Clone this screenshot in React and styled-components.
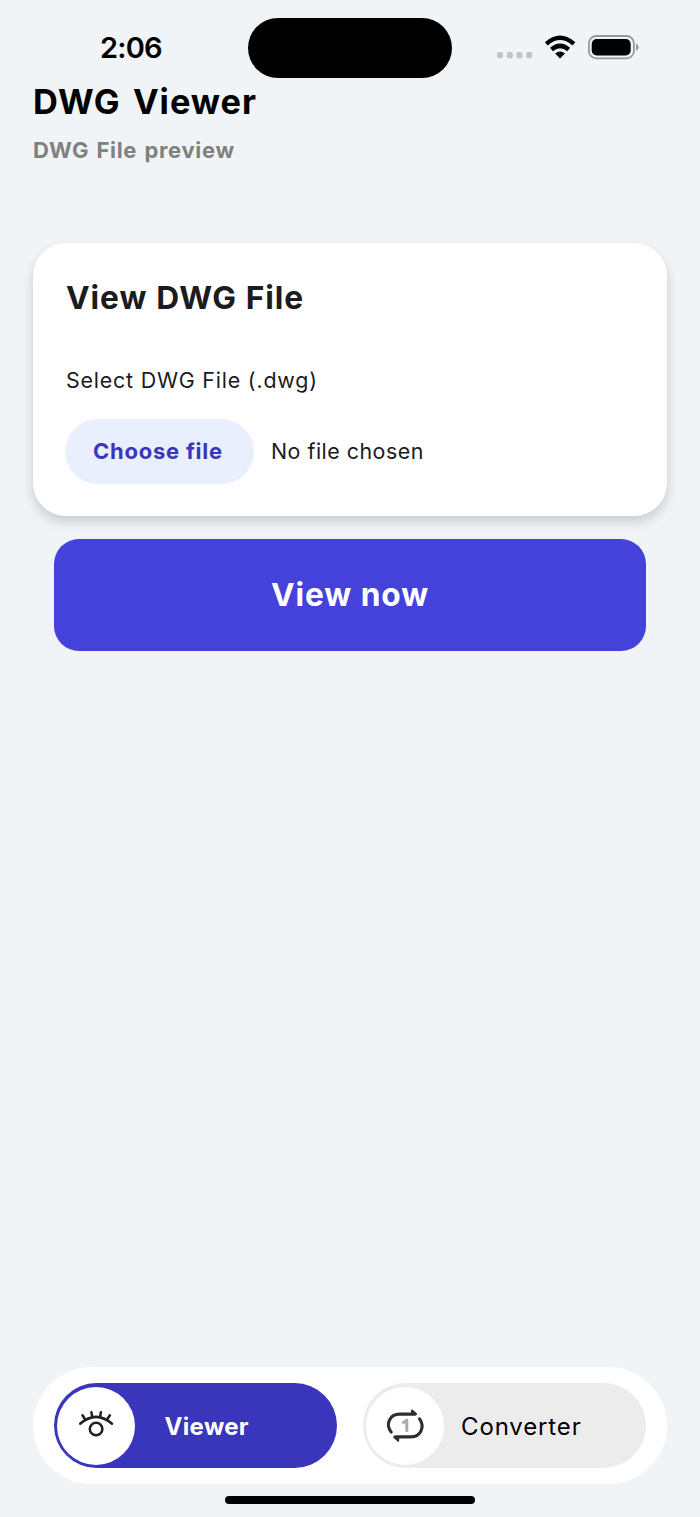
import React from "react";
import styled, { createGlobalStyle } from "styled-components";

const Global = createGlobalStyle`
  * { box-sizing: border-box; }
  body { margin: 0; background: #f0f4f7; }
`;

const Screen = styled.div`
  width: 700px;
  height: 1517px;
  display: flex;
  flex-direction: column;
  background: #f0f4f7;
  font-family: Inter, "Liberation Sans", sans-serif;
  overflow: hidden;
`;

const StatusBar = styled.header`
  height: 80px;
  flex: none;
  display: flex;
  padding-top: 18px;
`;

const Clock = styled.time`
  width: 248px;
  padding: 12px 0 0 100px;
  font-size: 29px;
  font-weight: 600;
  line-height: 36px;
  letter-spacing: -0.8px;
  color: #000;
`;

const Island = styled.div`
  width: 204px;
  height: 60.4px;
  border-radius: 30.2px;
  background: #000;
`;

const StatusIcons = styled.svg`
  display: block;
  width: 152px;
  height: 40px;
  margin: 10px 0 0 40px;
`;

const Heading = styled.div`
  height: 163px;
  flex: none;
  padding-left: 33px;
`;

const Title = styled.h1`
  margin: 0;
  font-size: 34.4px;
  line-height: 44px;
  font-weight: 650;
  letter-spacing: 0.95px;
  word-spacing: 3.4px;
  color: #000;
`;

const Subtitle = styled.p`
  margin: 10px 0 0;
  font-size: 22px;
  line-height: 32px;
  font-weight: 650;
  letter-spacing: 0.68px;
  word-spacing: 1.4px;
  color: #808080;
`;

const Card = styled.section`
  width: 634px;
  height: 273px;
  flex: none;
  margin-left: 33px;
  padding: 35px 33px 0;
  border-radius: 33px;
  background: #fff;
  box-shadow: 0 6px 12px rgba(0, 0, 0, 0.16);
  color: #1b1b20;
`;

const CardTitle = styled.h2`
  margin: 0;
  font-size: 31.7px;
  line-height: 40px;
  font-weight: 650;
  letter-spacing: 0.9px;
  word-spacing: 0.5px;
`;

const FieldLabel = styled.p`
  margin: 44px 0 21px;
  font-size: 21.4px;
  line-height: 36px;
  letter-spacing: 0.8px;
`;

const FileRow = styled.div`
  display: flex;
  align-items: center;
  gap: 17px;
`;

const ChooseButton = styled.button`
  width: 189px;
  height: 65px;
  margin-left: -1px;
  padding: 0 3px 2px 0;
  border: 0;
  border-radius: 33px;
  background: #e9effd;
  color: #3a36bc;
  font-family: inherit;
  font-size: 22px;
  font-weight: 650;
  letter-spacing: 0.75px;
`;

const FileName = styled.span`
  padding-bottom: 2px;
  font-size: 21.4px;
  letter-spacing: 0.5px;
`;

const PrimaryButton = styled.button`
  width: 592px;
  height: 112px;
  flex: none;
  margin: 23px 0 0 54px;
  padding: 0 0 2px;
  border: 0;
  border-radius: 25px;
  background: #4542dc;
  color: #fff;
  font-family: inherit;
  font-size: 31.7px;
  font-weight: 650;
  letter-spacing: 0.93px;
`;

const Nav = styled.nav`
  width: 634px;
  height: 117px;
  flex: none;
  margin: auto 0 0 33px;
  padding: 0 21px;
  display: flex;
  align-items: center;
  justify-content: space-between;
  border-radius: 58.5px;
  background: #fff;
`;

const Tab = styled.div`
  width: 283px;
  height: 85px;
  display: flex;
  align-items: center;
  padding-left: 3px;
  border-radius: 42.5px;
  background: ${(p) => (p.$active ? "#3a36bc" : "#ececec")};
  color: ${(p) => (p.$active ? "#fff" : "#000")};
`;

const TabIcon = styled.span`
  width: 78px;
  height: 78px;
  flex: none;
  border-radius: 50%;
  background: #fff;
  display: grid;
  place-items: center;
  svg { display: block; }
`;

const TabLabel = styled.span`
  margin-left: ${(p) => (p.$active ? 29.6 : 17)}px;
  padding-top: 2px;
  font-size: 24px;
  line-height: 32px;
  font-weight: ${(p) => (p.$active ? 650 : 400)};
  letter-spacing: ${(p) => (p.$active ? 0.3 : 0.86)}px;
`;

const HomeIndicator = styled.div`
  width: 250px;
  height: 8px;
  flex: none;
  margin: 11.5px 0 13.5px 225px;
  border-radius: 4px;
  background: #000;
`;

const Eye = () => (
  <svg width="52" height="51" viewBox="0 0 52 51" fill="none" stroke="#202020" strokeWidth="2.5" strokeLinecap="round">
    <path d="M10.2 23.8Q26 10 42 23.8M12.5 15.2l2.4 3.8M21.4 12.2l.7 4M30.9 12.2l-.7 4M39.9 15.2l-2.5 3.8" />
    <circle cx="26.1" cy="29" r="6.3" />
  </svg>
);

const Repeat = () => (
  <svg width="52" height="51" viewBox="-1 0 52 51" fill="none" strokeLinecap="round" strokeLinejoin="round">
    <path d="M11.2 32C5.4 24.6 9.1 14.1 19.8 14.1H35M39.6 18.8C44.8 26.2 41.4 36.9 30.8 36.9H15.4" stroke="#2e2e30" strokeWidth="3.1" />
    <path d="M32 10.4l4 3.7h-4zM18.2 40.7l-4-3.8h4z" fill="#2e2e30" stroke="#2e2e30" strokeWidth="2" />
    <path d="M23.4 22.4l3.4-2.2v10.4" stroke="#aaa" strokeWidth="3" />
  </svg>
);

export default function App() {
  return (
    <Screen>
      <Global />
      <StatusBar>
        <Clock>2:06</Clock>
        <Island />
        <StatusIcons viewBox="492 28 152 40">
          <g fill="#c2c4c7">
            <rect x="497" y="52" width="6" height="6.2" rx="2" />
            <rect x="506.8" y="52" width="6" height="6.2" rx="2" />
            <rect x="516.5" y="52" width="6" height="6.2" rx="2" />
            <rect x="526.2" y="52" width="6" height="6.2" rx="2" />
          </g>
          <g fill="none" stroke="#000" strokeWidth="4.4">
            <path d="M546.3 43.8Q560 31.7 573.9 43.8" />
            <path d="M551.5 49.5Q560 42.2 568.7 49.5" />
          </g>
          <path d="M555.2 53.6Q560 49.3 565 53.6L560 58.5Z" fill="#000" />
          <rect x="588.9" y="36" width="45" height="22.4" rx="7.5" fill="none" stroke="#98999c" strokeWidth="1.8" />
          <rect x="591.7" y="39" width="39" height="16.4" rx="5" fill="#000" />
          <path d="M636 43.5Q638.6 44.7 638.6 47.2T636 51Z" fill="#98999c" />
        </StatusIcons>
      </StatusBar>
      <Heading>
        <Title>DWG Viewer</Title>
        <Subtitle>DWG File preview</Subtitle>
      </Heading>
      <Card>
        <CardTitle>View DWG File</CardTitle>
        <FieldLabel>Select DWG File (.dwg)</FieldLabel>
        <FileRow>
          <ChooseButton>Choose file</ChooseButton>
          <FileName>No file chosen</FileName>
        </FileRow>
      </Card>
      <PrimaryButton>View now</PrimaryButton>
      <Nav>
        <Tab $active>
          <TabIcon><Eye /></TabIcon>
          <TabLabel $active>Viewer</TabLabel>
        </Tab>
        <Tab>
          <TabIcon><Repeat /></TabIcon>
          <TabLabel>Converter</TabLabel>
        </Tab>
      </Nav>
      <HomeIndicator />
    </Screen>
  );
}
